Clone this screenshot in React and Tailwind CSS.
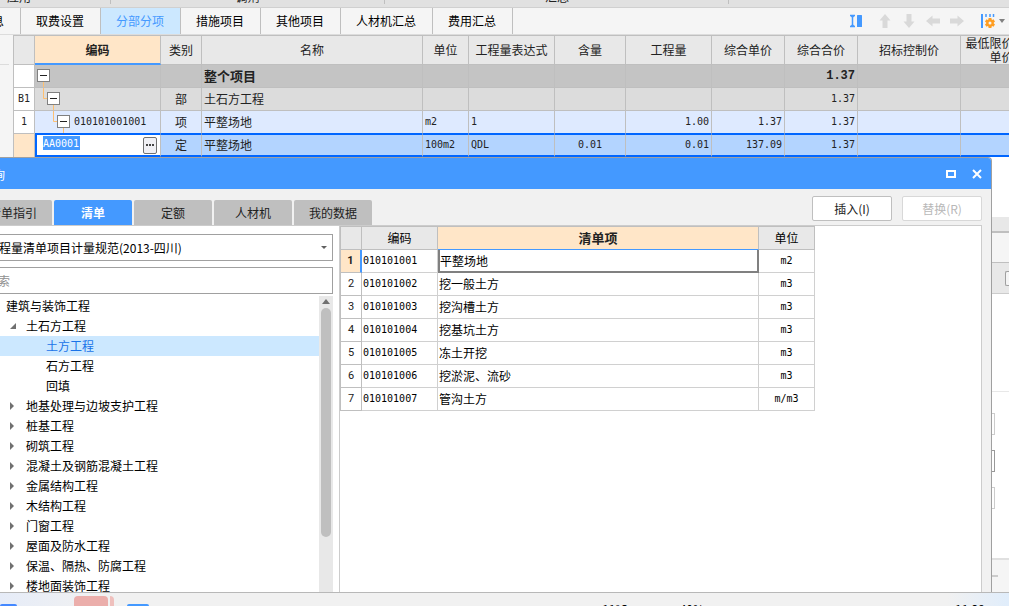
import React, { useState } from "react";
import clsx from "clsx";

const sans = "font-['Noto_Sans_CJK_SC',sans-serif]";
const mono = "font-['DejaVu_Sans_Mono','Noto_Sans_CJK_SC',monospace] text-[10px]";

const ribbonGroups = [
  { label: "应用", className: "w-[111px] border-r pl-[7px]" },
  { label: "调剂", className: "w-[274px] justify-center border-r" },
  { label: "汇总", className: "flex-1 border-r pl-40" },
];

const mainTabs = ["工程信息", "取费设置", "分部分项", "措施项目", "其他项目", "人材机汇总", "费用汇总"];

const mainColumns = [
  { label: "", width: "w-[21px]" },
  { label: "编码", width: "w-[126px]" },
  { label: "类别", width: "w-[41px]" },
  { label: "名称", width: "" },
  { label: "单位", width: "w-[46px]" },
  { label: "工程量表达式", width: "w-[86px]" },
  { label: "含量", width: "w-[71px]" },
  { label: "工程量", width: "w-[86px]" },
  { label: "综合单价", width: "w-[73px]" },
  { label: "综合合价", width: "w-[73px]" },
  { label: "招标控制价", width: "w-[103px]" },
  { label: "最低限价综合单价", width: "w-[82px]" },
];

const mainRows = [
  { no: "", code: "", level: 0, type: "", name: "整个项目", total: "1.37", bg: "bg-[#c4c4c4]" },
  { no: "B1", code: "", level: 1, type: "部", name: "土石方工程", total: "1.37", bg: "bg-[#dcdcdc]" },
  {
    no: "1",
    code: "010101001001",
    level: 2,
    type: "项",
    name: "平整场地",
    unit: "m2",
    expr: "1",
    qty: "1.00",
    price: "1.37",
    total: "1.37",
    bg: "bg-[#deeaff]",
  },
  {
    no: "",
    code: "AA0001",
    editing: true,
    type: "定",
    name: "平整场地",
    unit: "100m2",
    expr: "QDL",
    content: "0.01",
    qty: "0.01",
    price: "137.09",
    total: "1.37",
    bg: "bg-[#b3d4ff]",
  },
];

const dialogTabs = ["清单指引", "清单", "定额", "人材机", "我的数据"];

const tree = [
  { label: "建筑与装饰工程", level: 0 },
  { label: "土石方工程", level: 1, open: true },
  { label: "土方工程", level: 2 },
  { label: "石方工程", level: 2 },
  { label: "回填", level: 2 },
  { label: "地基处理与边坡支护工程", level: 1 },
  { label: "桩基工程", level: 1 },
  { label: "砌筑工程", level: 1 },
  { label: "混凝土及钢筋混凝土工程", level: 1 },
  { label: "金属结构工程", level: 1 },
  { label: "木结构工程", level: 1 },
  { label: "门窗工程", level: 1 },
  { label: "屋面及防水工程", level: 1 },
  { label: "保温、隔热、防腐工程", level: 1 },
  { label: "楼地面装饰工程", level: 1 },
];

const listItems = [
  { code: "010101001", name: "平整场地", unit: "m2" },
  { code: "010101002", name: "挖一般土方", unit: "m3" },
  { code: "010101003", name: "挖沟槽土方", unit: "m3" },
  { code: "010101004", name: "挖基坑土方", unit: "m3" },
  { code: "010101005", name: "冻土开挖", unit: "m3" },
  { code: "010101006", name: "挖淤泥、流砂", unit: "m3" },
  { code: "010101007", name: "管沟土方", unit: "m/m3" },
];

const ArrowIcon = ({ rotate }) => (
  <svg width="16" height="16" viewBox="0 0 16 16" className={rotate} fill="#d9d9d9">
    <path d="M8 1 L13.5 7.5 H10.5 V15 H5.5 V7.5 H2.5 Z" />
  </svg>
);

const FitColumnIcon = () => (
  <svg width="14" height="14" viewBox="0 0 14 14">
    <path d="M1 1.5H6M1 12.5H6M3.5 1.5V12.5" stroke="#4499ff" strokeWidth="1.5" fill="none" />
    <path d="M1 1.5L3.5 4L6 1.5ZM1 12.5L3.5 10L6 12.5Z" fill="#4499ff" />
    <rect x="8" y="1" width="5" height="12" rx="0.5" fill="#4499ff" />
  </svg>
);

const ColumnGearIcon = () => (
  <svg width="14" height="16" viewBox="0 0 14 16">
    <path d="M1 1V15" stroke="#4499ff" strokeWidth="2" />
    <path d="M5 1V5M9 1V4M12.5 1V4" stroke="#4499ff" strokeWidth="1.5" strokeDasharray="3 1" />
    <g fill="#ff9e22">
      <circle cx="9" cy="10" r="3.8" />
      <path d="M7.5 5H10.5V15H7.5Z" />
      <path d="M7.5 5H10.5V15H7.5Z" transform="rotate(60 9 10)" />
      <path d="M7.5 5H10.5V15H7.5Z" transform="rotate(120 9 10)" />
    </g>
    <circle cx="9" cy="10" r="1.5" fill="#f5f5f5" />
  </svg>
);

const TreeCell = ({ row }) => {
  const x = row.level * 10;
  return (
    <div className="flex h-[22px] items-center">
      <svg width="42" height="22" viewBox="0 0 42 22" className="shrink-0" fill="none">
        {row.level > 0 && <path d={`M${x - 1.5} 0V10.5H${x + 2}`} stroke="#ffc070" />}
        <path d={`M${x + 8.5} 17V22`} stroke="#ffc070" />
        <rect x={x + 2.5} y="4.5" width="12" height="12" fill="#fff" stroke="#808080" />
        <path d={`M${x + 5} 10.5H${x + 12}`} stroke="#222" />
      </svg>
      <span className="-ml-[3px]">{row.code}</span>
    </div>
  );
};

const EditCell = ({ code }) => {
  const [value, setValue] = useState(code);
  return (
    <div className="flex h-5 items-center justify-between pr-[3px] pl-1.5">
      <input
        aria-label="编码"
        value={value}
        onChange={(e) => setValue(e.target.value)}
        className="mb-1 h-3.5 w-[37px] bg-[#4499ff] text-white outline-none"
      />
      <button
        aria-label="选择"
        className="flex h-[17px] w-3.5 items-center justify-center gap-px rounded-xs border border-[#707070] bg-[#f0f0f4]"
      >
        <span className="size-0.5 bg-[#444]" />
        <span className="size-0.5 bg-[#444]" />
        <span className="size-0.5 bg-[#444]" />
      </button>
    </div>
  );
};

const MainTable = () => (
  <table className="w-full table-fixed border-separate border-spacing-0 border-t border-l border-[#bfbfbf] text-xs text-[#222]">
    <thead>
      <tr className="h-[29px]">
        {mainColumns.map((col, i) => (
          <th
            key={i}
            className={clsx(
              "border-r border-r-[#bfbfbf] p-0 leading-[14px]",
              col.width,
              i === 1
                ? "border-b-2 border-b-[#4499ff] bg-[#ffe6c8] font-bold"
                : "border-b border-b-[#bfbfbf] bg-[#e8e8e8] font-normal"
            )}
          >
            {col.label}
          </th>
        ))}
      </tr>
    </thead>
    <tbody>
      {mainRows.map((row, i) => {
        const line = row.editing
          ? "border-t border-b-2 border-y-[#0066ff]"
          : i === 2
            ? "border-b border-b-[#0066ff]"
            : "border-b border-b-[#bfbfbf]";
        const cell = clsx("overflow-hidden border-r border-r-[#bfbfbf] py-0 leading-5 whitespace-nowrap", line);
        const num = clsx(cell, "px-0.5 text-right", row.bg, i === 0 ? "font-['Liberation_Mono',monospace] font-bold" : mono);
        return (
          <tr key={i} className="h-[23px]">
            <td
              className={clsx(
                "border-r border-r-[#bfbfbf] p-0 text-center",
                mono,
                row.editing ? "bg-[#ffe6c8]" : "border-b border-b-[#bfbfbf] bg-white"
              )}
            >
              {row.no}
            </td>
            <td
              className={clsx(
                "border-r border-r-[#bfbfbf] p-0",
                line,
                mono,
                row.editing ? "border-l-2 border-l-[#0066ff] bg-white" : row.bg
              )}
            >
              {row.editing ? <EditCell code={row.code} /> : <TreeCell row={row} />}
            </td>
            <td className={clsx(cell, row.bg, "px-0 text-center")}>{row.type}</td>
            <td className={clsx(cell, row.bg, "px-0.5", i === 0 && "text-[13px] font-bold")}>{row.name}</td>
            <td className={clsx(cell, row.bg, mono, "px-0.5")}>{row.unit}</td>
            <td className={clsx(cell, row.bg, mono, "px-0.5")}>{row.expr}</td>
            <td className={clsx(cell, row.bg, mono, "px-0 text-center")}>{row.content}</td>
            <td className={num}>{row.qty}</td>
            <td className={num}>{row.price}</td>
            <td className={num}>{row.total}</td>
            <td className={num}></td>
            <td className={num}></td>
          </tr>
        );
      })}
    </tbody>
  </table>
);

const TreePanel = () => {
  const [selected, setSelected] = useState("土方工程");
  return (
    <div className="flex w-[370px] shrink-0 flex-col border-r border-[#ccc] pt-2 pr-1.5 pl-2">
      <div className="relative">
        <select
          aria-label="清单规范"
          className="h-[27px] w-full appearance-none border border-[#a0a0a0] bg-white pl-2 text-xs text-black"
        >
          <option>工程量清单项目计量规范(2013-四川)</option>
        </select>
        <svg width="6" height="4" className="pointer-events-none absolute top-3 right-1.5" fill="#606060">
          <path d="M0 0H6L3 3Z" />
        </svg>
      </div>
      <input
        aria-label="搜索"
        placeholder="搜索"
        className="mt-1.5 h-[27px] w-full border border-[#a0a0a0] px-[7px] text-xs placeholder:text-[#909090]"
      />
      <div className="mt-0.5 flex min-h-0 flex-1">
        <ul className="flex-1 overflow-hidden text-xs text-black">
          {tree.map((item) => (
            <li key={item.label}>
              <button
                onClick={() => setSelected(item.label)}
                className={clsx(
                  "flex h-5 w-full items-center text-left",
                  item.level === 0 && "pl-7",
                  item.level === 1 && "pl-[30px]",
                  item.level === 2 && "pl-[68px]",
                  selected === item.label && "bg-[#cce8ff] text-[#1a73e8]"
                )}
              >
                {item.level === 1 && (
                  <svg width="8" height="8" viewBox="0 0 8 8" className="mr-2.5" fill="#707070">
                    <path d={item.open ? "M8 1V7H2Z" : "M2 0V8L6 4Z"} />
                  </svg>
                )}
                {item.label}
              </button>
            </li>
          ))}
        </ul>
        <div className="flex w-3.5 flex-col items-center bg-[#e8e8e8] pt-[3px]">
          <svg width="8" height="5" fill="#707070">
            <path d="M0 5H8L4 0Z" />
          </svg>
          <div className="mt-1 h-[229px] w-2.5 rounded-full bg-[#bfbfbf]" />
        </div>
      </div>
    </div>
  );
};

const ListTable = () => (
  <table className="w-[475px] table-fixed border-separate border-spacing-0 border-t border-l border-[#bfbfbf] text-xs text-black">
    <thead>
      <tr className="h-[23px]">
        <th className="w-[21px] border-r border-b border-[#bfbfbf] bg-[#e8e8e8] p-0"></th>
        <th className="w-[76px] border-r border-b border-[#bfbfbf] bg-[#e8e8e8] p-0 font-normal">编码</th>
        <th className="border-r border-b border-r-[#bfbfbf] border-b-[#4499ff] bg-[#ffe6c8] p-0 text-[13px] leading-5 font-bold text-[#222]">
          清单项
        </th>
        <th className="w-14 border-r border-b border-[#bfbfbf] bg-[#e8e8e8] p-0 font-normal">单位</th>
      </tr>
    </thead>
    <tbody>
      {listItems.map((item, i) => (
        <tr key={item.code} className="h-[23px]">
          <td
            className={clsx(
              "border-b border-b-[#bfbfbf] p-0 text-center font-['Roboto',sans-serif] text-[11px] text-[#222]",
              i === 0 ? "border-r-2 border-r-[#4499ff] bg-[#ffe6c8] font-bold" : "border-r border-r-[#bfbfbf]"
            )}
          >
            {i + 1}
          </td>
          <td className={clsx("border-r border-b border-[#d0d0d0] px-px py-0", mono)}>{item.code}</td>
          <td
            className={clsx(
              "py-0 leading-5",
              i === 0 ? "border-2 border-t-0 border-[#808080] px-0" : "border-r border-b border-[#d0d0d0] px-px"
            )}
          >
            {item.name}
          </td>
          <td className={clsx("border-r border-b border-[#d0d0d0] p-0 text-center", mono)}>{item.unit}</td>
        </tr>
      ))}
    </tbody>
  </table>
);

const QueryDialog = () => {
  const [tab, setTab] = useState("清单");
  return (
    <div className="absolute top-0 right-[17px] bottom-0 -left-[30px] flex flex-col overflow-hidden rounded-tr border-t border-r border-[#a0a0a0] bg-[#f1f1f1]">
      <div className="flex h-[31px] shrink-0 items-center justify-between bg-[#4499ff] pr-2 pl-[11px] text-xs text-white">
        <h2 className="pt-0.5">查询</h2>
        <div className="flex gap-3.5">
          <button aria-label="最大化">
            <svg width="12" height="12" fill="none" stroke="#fff" strokeWidth="2">
              <rect x="2" y="3" width="8" height="6" />
            </svg>
          </button>
          <button aria-label="关闭">
            <svg width="12" height="12" fill="none" stroke="#fff" strokeWidth="2">
              <path d="M2 2L10 10M10 2L2 10" />
            </svg>
          </button>
        </div>
      </div>
      <div className="flex h-9 shrink-0 items-end justify-between pr-[9px] pl-1 text-xs">
        <div className="flex gap-0.5">
          {dialogTabs.map((label) => (
            <button
              key={label}
              onClick={() => setTab(label)}
              className={clsx(
                "h-[25px] w-[78px] rounded-t-xs",
                tab === label ? "bg-[#4499ff] font-bold text-white" : "bg-[#bfbfbf] text-[#222]"
              )}
            >
              {label}
            </button>
          ))}
        </div>
        <div className="mb-1 flex gap-2.5">
          <button className="h-[25px] w-20 rounded-xs border border-[#bfbfbf] bg-white text-[#222]">插入(I)</button>
          <button disabled className="h-[25px] w-20 rounded-xs border border-[#d8d8d8] bg-white text-[#b8b8b8]">
            替换(R)
          </button>
        </div>
      </div>
      <div className="mr-[9px] flex min-h-0 flex-1 border-t border-r border-[#ccc] bg-white">
        <TreePanel />
        <div>
          <ListTable />
        </div>
      </div>
    </div>
  );
};

// property pane of the main window, mostly covered by the dialog
const SidePane = () => (
  <div className="flex h-full flex-col bg-white pt-[60px]">
    <div className="h-4 shrink-0 border-b-2 border-[#bfbfbf] bg-[#e8e8e8]" />
    <div className="h-[30px] shrink-0 border-b border-[#bfbfbf] bg-[#f5f5f5]" />
    <div className="flex h-[31px] shrink-0 items-center justify-end border-b border-[#ccc] bg-[#e8e8e8]">
      <div className="h-[15px] w-1 rounded-l-xs border border-r-0 border-[#a0a0a0] bg-[#f5f5f5]" />
    </div>
    <div className="h-[98px] shrink-0 border-b border-[#e8e8e8]" />
    <div className="mr-3.5 flex flex-col gap-[15px] pt-[21px]">
      <div className="h-[22px] border border-[#ccc]" />
      <div className="h-[22px] border border-[#999]" />
      <div className="h-[22px] border border-[#ccc]" />
    </div>
    <div className="mt-auto flex h-[34px] shrink-0 items-center border-t-2 border-[#e0e0e0] bg-[#f5f5f5]">
      <div className="mr-[11px] h-0.5 flex-1 bg-[#ccc]" />
    </div>
  </div>
);

const App = () => {
  const [active, setActive] = useState("分部分项");

  return (
    <div className={clsx("flex h-screen flex-col overflow-hidden bg-white text-xs", sans)}>
      {/* ribbon group captions */}
      <div className="flex h-2 shrink-0 overflow-hidden border-b border-[#d0d0d0] bg-[#e1e1e1] leading-3 text-[#222]">
        {ribbonGroups.map((group) => (
          <div key={group.label} className={clsx("flex h-1 items-end border-[#bfbfbf] pb-px", group.className)}>
            {group.label}
          </div>
        ))}
        <div className="w-[280px]" />
      </div>

      <div className="flex h-[27px] shrink-0 items-center justify-between border-b border-[#dcdcdc] bg-[#f5f5f5]">
        <nav className="-ml-[59px] flex h-full">
          {mainTabs.map((label) => (
            <button
              key={label}
              onClick={() => setActive(label)}
              className={clsx(
                "border-r border-[#bfbfbf] pr-4 pl-[15px]",
                active === label ? "bg-[#cce8ff] text-[#4499ff]" : "text-black"
              )}
            >
              {label}
            </button>
          ))}
        </nav>
        <div className="flex items-center gap-2 pr-1">
          <button aria-label="列宽" className="mr-1.5">
            <FitColumnIcon />
          </button>
          <button aria-label="上移">
            <ArrowIcon />
          </button>
          <button aria-label="下移">
            <ArrowIcon rotate="rotate-180" />
          </button>
          <button aria-label="左移">
            <ArrowIcon rotate="-rotate-90" />
          </button>
          <button aria-label="右移">
            <ArrowIcon rotate="rotate-90" />
          </button>
          <button aria-label="列设置" className="ml-2 flex items-center gap-1">
            <ColumnGearIcon />
            <svg width="6" height="4" fill="#808080">
              <path d="M0 0H6L3 4Z" />
            </svg>
          </button>
        </div>
      </div>

      <div className="flex shrink-0">
        <div className="w-[13px] shrink-0 bg-[#f5f5f5]">
          <div className="mr-1 h-[30px] border-b border-[#dcdcdc]" />
        </div>
        <div className="-mr-[34px] flex-1">
          <MainTable />
        </div>
      </div>

      <div className="relative min-h-0 flex-1">
        <SidePane />
        <QueryDialog />
      </div>

      {/* taskbar */}
      <div className="flex h-3.5 shrink-0 items-end overflow-hidden border-t border-[#b8b8b8] bg-linear-to-r from-[#e6ecf8] via-[#f1f1f1] via-10% to-[#f1f1f1] leading-3 text-black">
        <div className="h-0.5 w-[17px] rounded-t-sm bg-[#4488ff]" />
        <div className="ml-[57px] h-2.5 w-[34px] rounded-t bg-[#ebaeab]" />
        <div className="ml-0.5 h-2.5 w-1 rounded-tr bg-[#efc0bd]" />
        <div className="ml-[13px] h-0.5 w-[22px] rounded-t-sm bg-[#4499ff]" />
        <div className="flex h-[3px] flex-1 justify-end gap-[52px] pr-[305px]">
          <span>11°C</span>
          <span>40%</span>
        </div>
        <div className="-ml-[62px] flex h-[13px] w-[62px] items-start bg-linear-to-r from-[#f1f1f1] to-[#e0edfb] pt-[10px] pl-2">
          11:29
        </div>
      </div>
    </div>
  );
};

export default App;
